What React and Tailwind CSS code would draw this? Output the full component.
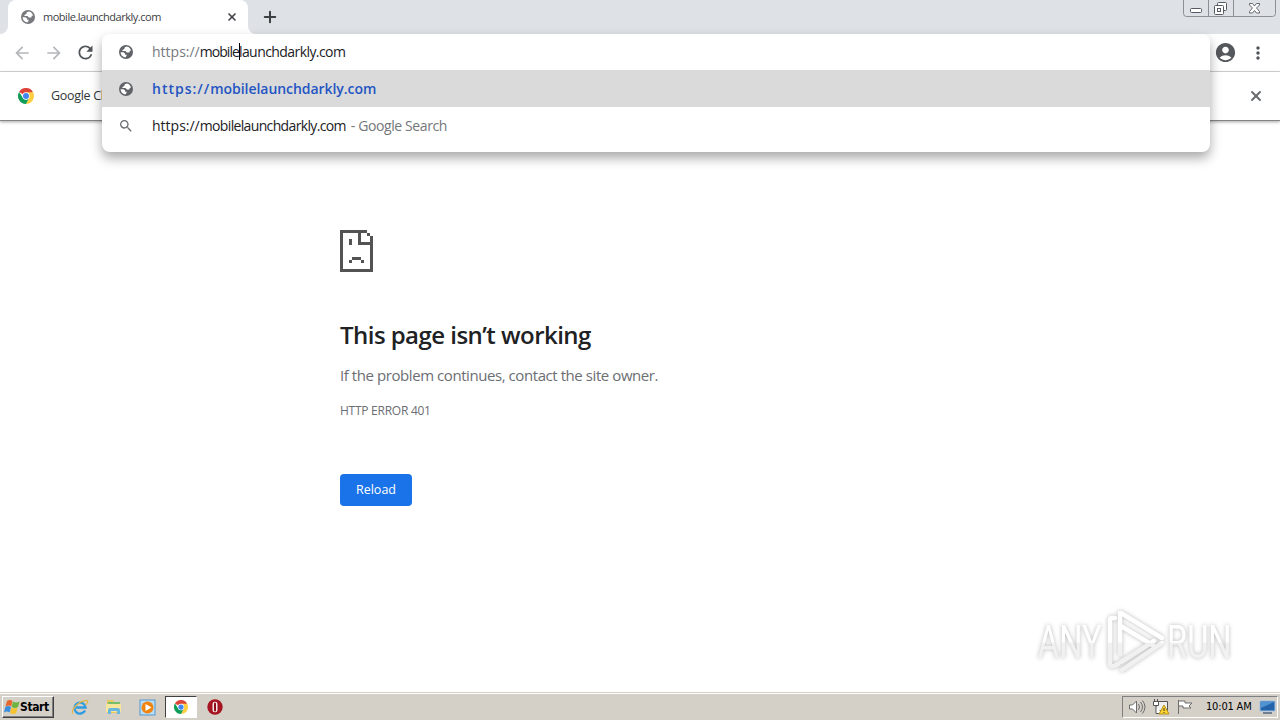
import { X, Plus } from "lucide-react";
import { MdArrowBack, MdArrowForward, MdRefresh, MdSearch, MdAccountCircle, MdMoreVert } from "react-icons/md";

function Globe({ className }) {
  return (
    <svg viewBox="0 0 16 16" className={className}>
      <circle cx="8" cy="8" r="7" fill="currentColor" />
      <path d="M9 2.400 6.800 3.300 6.300 5 4 6.200l1 .9h2.500l1.300 1.400 2.600-.1.300-1.500 1.300-.3A5.300 5.300 0 0 0 9 2.400" fill="white" />
      <path d="M2.600 8.300h2.900l1.600 1.300v1.200h1.700l-.5 1.400-1 1.200A5.400 5.400 0 0 1 2.600 8.300" fill="white" />
    </svg>
  );
}

function ChromeLogo({ className }) {
  return (
    <svg viewBox="0 0 48 48" className={className}>
      <path d="M24 24 3.200 12A24 24 0 0 1 44.800 12z" fill="#db4437" />
      <path d="M24 13h21.300A24 24 0 0 1 24 48l9.500-18.500z" fill="#ffcd40" />
      <path d="M3.200 12 14.500 29.500 24 35 33.500 29.500 24 48A24 24 0 0 1 3.200 12z" fill="#0f9d58" />
      <circle cx="24" cy="24" r="11" fill="white" />
      <circle cx="24" cy="24" r="9" fill="#4285f4" />
    </svg>
  );
}

function WindowControls() {
  return (
    <svg width="93" height="17" viewBox="0 0 93 17" fill="none" className="mr-1">
      <path d="M.5 0v13.500q0 3 3 3h86q3 0 3-3V0M25.500 0v16M50.500 0v16" stroke="#8b9098" />
      <rect x="7.500" y="8.500" width="11" height="4" rx="1" fill="white" stroke="#555a62" />
      <rect x="34.500" y="2.500" width="9" height="8" rx="1" fill="white" stroke="#555a62" />
      <rect x="31.500" y="5.500" width="9" height="9" rx="1" fill="white" stroke="#555a62" />
      <rect x="34.500" y="8.500" width="3" height="3" stroke="#555a62" />
      <path
        d="M66.500 3.500h3l2 2.500 2-2.500h3v1.500L73.500 8l3 3.500v1.500h-3l-2-2.500-2 2.500h-3v-1.500l3-3.500-3-3z"
        fill="white"
        stroke="#555a62"
        strokeWidth=".9"
      />
    </svg>
  );
}

function TabStrip() {
  return (
    <div className="flex h-[34px] bg-[#dee1e6]">
      <div className="flex w-2 items-end">
        <svg viewBox="0 0 8 8" className="size-2">
          <path d="M8 0v8H0a8 8 0 0 0 8-8" fill="white" />
        </svg>
      </div>
      <div className="flex w-60 items-center rounded-t-lg bg-white pr-2.5 pl-3">
        <Globe className="size-4 text-[#77797c]" />
        <span className="ml-[7px] flex-1 text-[11px] tracking-[-0.480px] whitespace-nowrap text-[#3c4043]">mobile.launchdarkly.com</span>
        <X className="size-3" strokeWidth={3.400} color="#45494d" />
      </div>
      <div className="flex w-2 items-end">
        <svg viewBox="0 0 8 8" className="size-2">
          <path d="M0 0v8h8a8 8 0 0 1-8-8" fill="white" />
        </svg>
      </div>
      <div className="ml-[5px] flex flex-1 items-center">
        <Plus className="size-[18px]" strokeWidth={2.700} color="#3c4043" />
      </div>
      <WindowControls />
    </div>
  );
}

function Toolbar() {
  return (
    <div className="flex h-[38px] items-center border-b border-[#d5d7da] bg-white pr-3 pl-3">
      <MdArrowBack className="size-5" color="#b5b7ba" />
      <MdArrowForward className="ml-3 size-5" color="#b5b7ba" />
      <MdRefresh className="ml-[11px] size-[21px]" color="#505458" />
      <div className="flex-1" />
      <MdAccountCircle className="size-[23px]" color="#54585d" />
      <MdMoreVert className="ml-[11px] size-5" color="#505458" />
    </div>
  );
}

function InfoBar() {
  return (
    <div className="flex h-[49px] items-center border-b border-[#858585] bg-white pr-4 pl-[18px] shadow-[0_1px_3px_rgba(0,0,0,0.35)]">
      <ChromeLogo className="size-4" />
      <span className="ml-[17px] flex-1 text-[12.500px] tracking-[-0.300px] whitespace-nowrap text-[#333639]">Google Chrome</span>
      <X className="size-4" strokeWidth={2.800} color="#66696d" />
    </div>
  );
}

function Omnibox() {
  return (
    <div className="absolute top-[34px] left-[102px] h-[118px] w-[1108px] rounded-lg bg-white text-[14px] shadow-[0_6px_12px_rgba(0,0,0,0.34)]">
      <div className="flex h-9 items-center pl-4">
        <Globe className="size-4 text-[#5f6368]" />
        <div className="ml-[18px] flex items-center pb-0.5 whitespace-nowrap text-[#202124]">
          <span className="text-[#76797d]">https://</span>
          <span className="tracking-[-0.950px]">mobile</span>
          <span className="-mr-px h-[17px] w-px bg-black" />
          <span className="tracking-[-0.570px]">launchdarkly.com</span>
        </div>
      </div>
      <div className="flex h-[37px] items-center bg-[#dadada] pl-4">
        <Globe className="size-4 text-[#5f6368]" />
        <span className="ml-[18px] font-semibold tracking-[-0.050px] whitespace-nowrap text-[#2455c3]">
          <span className="tracking-[1px]">https://</span>mobilelaunchdarkly.com
        </span>
      </div>
      <div className="flex h-[38px] items-center pb-px pl-4">
        <MdSearch className="size-4" color="#6b6e72" />
        <span className="ml-[18px] whitespace-nowrap text-[#202124]">
          https://<span className="tracking-[-0.650px]">mobilelaunchdarkly.com</span>
        </span>
        <span className="ml-[5px] tracking-[-0.400px] whitespace-nowrap text-[#74777a]">- Google Search</span>
      </div>
    </div>
  );
}

function SadPage() {
  return (
    <svg width="33" height="42" viewBox="0 0 11 14" shapeRendering="crispEdges" fill="#535353">
      <path d="M0 0h9v1H1v12h9V5h1v9H0z" />
      <path d="M6 1h1v3h4v1H6zM9 1h1v1H9zM10 2h1v3h-1z" />
      <path d="M3 3h1v2H3zM4 9h3v1H4zM3 10h1v1H3zM7 10h1v1H7z" />
    </svg>
  );
}

function ErrorPage() {
  return (
    <main className="flex flex-1 flex-col items-start pt-[109px] pl-[340px]">
      <SadPage />
      <h1 className="mt-[47px] text-[24px] leading-8 font-semibold tracking-[-0.540px] whitespace-nowrap text-[#202124]">This page isn’t working</h1>
      <p className="mt-3 text-[15px] leading-6 tracking-[-0.430px] whitespace-nowrap text-[#6b6e72]">If the problem continues, contact the site owner.</p>
      <p className="mt-[14px] text-[12px] leading-5 tracking-[-0.260px] whitespace-nowrap text-[#6b6e72]">HTTP ERROR 401</p>
      <button className="mt-[53px] h-8 w-[72px] rounded bg-[#1a73e8] pt-px text-[12.500px] text-white">Reload</button>
    </main>
  );
}

function Watermark() {
  return (
    <div className="absolute top-[608px] left-[1035px] [filter:drop-shadow(0_0_2px_rgba(0,0,0,0.28))]">
      <svg width="210" height="68" viewBox="0 0 210 68" fill="none" fontFamily="Roboto, sans-serif" fontSize="46">
        <defs>
          <linearGradient id="fade" gradientUnits="userSpaceOnUse" x1="0" y1="0" x2="0" y2="68">
            <stop offset="0.5" stopColor="#ffffff" />
            <stop offset="0.52" stopColor="#f1f1f1" />
          </linearGradient>
        </defs>
        <g fill="url(#fade)">
          <text transform="scale(0.71 1)" x="4" y="50">ANY</text>
          <text transform="scale(0.71 1)" x="186" y="50">RUN</text>
        </g>
        <path
          d="M80 10h-3q-2 0-2 3v42q0 4 4 3l4-2M85 5v41M86 5l41 25M86 18l33 20M87 62l40-27M86 54l33-21"
          stroke="url(#fade)"
          strokeWidth="4.500"
          strokeLinejoin="round"
          strokeLinecap="round"
        />
      </svg>
    </div>
  );
}

function StartFlag() {
  return (
    <svg width="16" height="16" viewBox="0 0 16 16">
      <path d="M3 2q3-2 5.500 0L7.200 7.500Q5 5.500 1.500 7.500z" fill="#e8652b" />
      <path d="M9 2.500q3 2 6.500 0L14 8q-3 2-6.300 0z" fill="#6db33f" />
      <path d="M1.300 8q3-2 5.700 0L5.700 13.500Q3 11.500 0 13.500z" fill="#3b8edb" />
      <path d="M7.500 8.500q3 2 6 0L12.300 14q-3 2-6.200 0z" fill="#f6c32f" />
    </svg>
  );
}

function ExplorerE() {
  return (
    <svg width="18" height="18" viewBox="0 0 18 18" fill="none">
      <path d="M14 12.500A5.500 5.500 0 1 1 14.500 9.500H5" stroke="#2f9ce0" strokeWidth="2.400" />
      <path d="M2 15.500C-1 14 6 3.500 15 2.300c3-.2 1.500 3-.5 4.800" stroke="#e0b64a" strokeWidth="1.300" />
    </svg>
  );
}

function Folder() {
  return (
    <svg width="18" height="18" viewBox="0 0 18 18">
      <path d="M2 2h6l1 2h6v11H2z" fill="#e9c860" />
      <path d="M3 4h12v3H3z" fill="#78bd67" />
      <path d="M1 6h15v8H1z" fill="#f7e59b" />
      <path d="M3 16v-4q0-2 2-2h8q2 0 2 2v4h-3v-3H6v3z" fill="#69b7df" />
    </svg>
  );
}

function MediaPlayer() {
  return (
    <svg width="17" height="17" viewBox="0 0 17 17">
      <rect x="1" y="1" width="15" height="15" fill="#b9ddf6" stroke="#5197cf" />
      <circle cx="8.500" cy="8.500" r="6" fill="#ef850e" />
      <path d="m6.500 5 6 3.500-6 3.500z" fill="white" />
    </svg>
  );
}

function Opera() {
  return (
    <svg width="16" height="16" viewBox="0 0 16 16">
      <circle cx="8" cy="8" r="7.700" fill="#a51420" />
      <rect x="5.500" y="2.700" width="5" height="10.600" rx="2.200" fill="#f6e9e9" />
      <rect x="7" y="3.500" width="2" height="9" rx="1" fill="#8d0d17" />
    </svg>
  );
}

function TrayIcons() {
  return (
    <svg width="64" height="18" viewBox="1 0 64 18" fill="none" stroke="#6d6d6d">
      <path d="M1.500 7h3l4-4v12l-4-4h-3z" fill="white" />
      <path d="M10.500 6q2 3 0 6M12.500 4q4 5 0 10M14.500 2.500q5 6.500 0 13" />
      <path d="M28.500 3.500h11v9h-11z" fill="#eee" stroke="#555" />
      <path d="M26.500 1v3M29.500 1v3M25.500 3.500h5v4h-5zM28 8v7.500h6" fill="white" stroke="#555" />
      <path d="m36 7 5 9H31z" fill="#ffd52e" stroke="#b7901c" />
      <path d="M36 10v3M36 14v1" stroke="#333" />
      <path d="M50.500 2v14M51 3h6v2h7l-3 3 2 2h-8V8h-4" fill="white" />
    </svg>
  );
}

function Taskbar() {
  return (
    <footer className="flex h-[28px] items-center border-t border-[#d4d0c8] bg-[#d4d0c8] pt-px pl-0.5 shadow-[inset_0_1px_0_white] [font-family:'DejaVu_Sans_Condensed','DejaVu_Sans',sans-serif]">
      <button className="flex h-[22px] w-[52px] items-center border border-t-white border-r-[#404040] border-b-[#404040] border-l-white pl-px shadow-[inset_-1px_-1px_0_#808080]">
        <StartFlag />
        <span className="text-[12px] font-bold tracking-[-0.400px] text-black">Start</span>
      </button>
      <div className="ml-[17px] flex items-center gap-4">
        <ExplorerE />
        <Folder />
        <MediaPlayer />
      </div>
      <div className="ml-[9px] flex h-[22px] w-8 items-center justify-center border border-t-[#404040] border-r-white border-b-white border-l-[#404040] bg-white">
        <ChromeLogo className="size-3.5" />
      </div>
      <div className="ml-2.5 flex-1">
        <Opera />
      </div>
      <div className="mr-0.5 flex h-[22px] w-[156px] items-center border border-t-[#808080] border-r-white border-b-white border-l-[#808080] pl-1.5">
        <TrayIcons />
        <span className="ml-[13px] w-[53px] text-[11px] tracking-[-0.180px] whitespace-nowrap text-black">10:01 AM</span>
        <svg width="17" height="16" viewBox="0 0 17 16">
          <path d="M1 2h15v10H1z" fill="#2463a9" stroke="#9fc3e3" />
          <path d="M2 3h13L2 9z" fill="#4f93d1" />
          <path d="M4 14h9" stroke="#6d7f91" strokeWidth="2" />
        </svg>
      </div>
    </footer>
  );
}

export default function App() {
  return (
    <div className="relative flex h-[720px] w-[1280px] flex-col overflow-hidden bg-white [font-family:'Open_Sans','Noto_Sans',sans-serif]">
      <TabStrip />
      <Toolbar />
      <InfoBar />
      <ErrorPage />
      <Taskbar />
      <Omnibox />
      <Watermark />
    </div>
  );
}
